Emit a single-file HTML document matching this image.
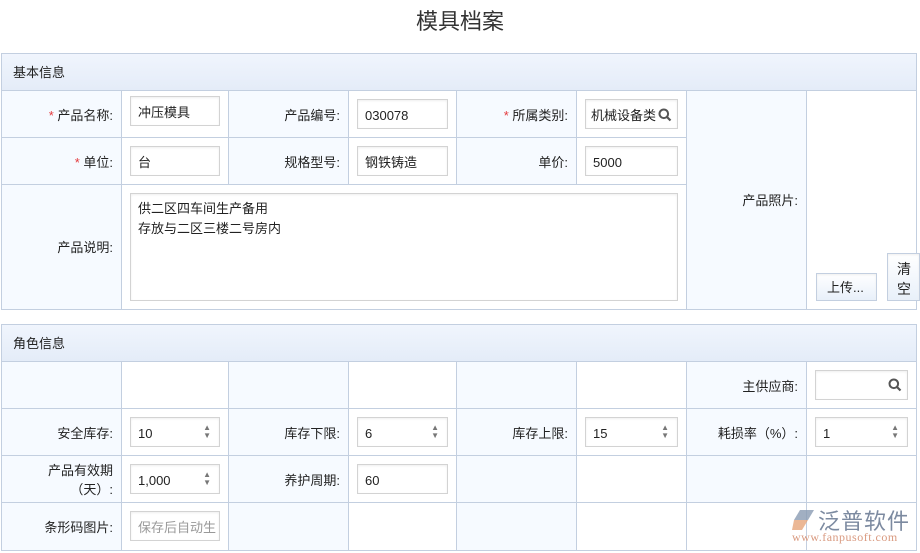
<!DOCTYPE html><html><head><meta charset="utf-8"><style>
*{box-sizing:border-box;margin:0;padding:0}
body{width:920px;height:553px;background:#fff;font-family:"Liberation Sans","Noto Sans CJK SC",sans-serif;font-size:13px;color:#222;position:relative;overflow:hidden}
.a{position:absolute}
.t{left:0;width:920px;top:4px;text-align:center;font-size:22px;color:#333}
.sec{border:1px solid #c3cfe0}
.hd{background:linear-gradient(#f0f5fd,#e4ecf8);border-bottom:1px solid #c3cfe0;padding-left:11px;font-size:13px}
.c{border-right:1px solid #c3cfe0;border-bottom:1px solid #c3cfe0}
.l{background:#f6faff;text-align:right;padding-right:8px}
.w{background:#fff}
.in{position:absolute;border:1px solid #d3d3d3;background:#fff;height:30px;line-height:31px;padding-left:7px;box-shadow:inset 0 1px 2px #eee}
.r{color:#e4393c}
.sp{position:absolute;right:8px;top:6px;font-size:8px;line-height:8px;color:#777}
</style></head><body>
<div class="a t">模具档案</div>
<div class="a sec" style="left:1px;top:53px;width:916px;height:257px"></div>
<div class="a hd" style="left:2px;top:54px;width:914px;height:37px;line-height:37px">基本信息</div>
<div class="a c l" style="left:2px;top:91px;width:120px;height:47px;line-height:49px"><span class="r">*</span> 产品名称:</div>
<div class="a c w" style="left:122px;top:91px;width:107px;height:47px"></div>
<div class="a c l" style="left:229px;top:91px;width:120px;height:47px;line-height:49px">产品编号:</div>
<div class="a c w" style="left:349px;top:91px;width:108px;height:47px"></div>
<div class="a c l" style="left:457px;top:91px;width:120px;height:47px;line-height:49px"><span class="r">*</span> 所属类别:</div>
<div class="a c w" style="left:577px;top:91px;width:110px;height:47px"></div>
<div class="a c l" style="left:2px;top:138px;width:120px;height:47px;line-height:49px"><span class="r">*</span> 单位:</div>
<div class="a c w" style="left:122px;top:138px;width:107px;height:47px"></div>
<div class="a c l" style="left:229px;top:138px;width:120px;height:47px;line-height:49px">规格型号:</div>
<div class="a c w" style="left:349px;top:138px;width:108px;height:47px"></div>
<div class="a c l" style="left:457px;top:138px;width:120px;height:47px;line-height:49px">单价:</div>
<div class="a c w" style="left:577px;top:138px;width:110px;height:47px"></div>
<div class="a c l" style="left:2px;top:185px;width:120px;height:124px;line-height:126px;border-bottom:none">产品说明:</div>
<div class="a c w" style="left:122px;top:185px;width:565px;height:124px;border-bottom:none"></div>
<div class="a c l" style="left:687px;top:91px;width:120px;height:218px;line-height:220px;border-bottom:none">产品照片:</div>
<div class="a w" style="left:807px;top:91px;width:109px;height:218px"></div>
<div class="in" style="left:130px;top:96px;width:90px">冲压模具</div>
<div class="in" style="left:357px;top:99px;width:91px">030078</div>
<div class="in" style="left:585px;top:99px;width:93px;padding-left:5px">机械设备类<svg class="a" style="right:5px;top:8px" width="14" height="14" viewBox="0 0 14 14"><circle cx="5.8" cy="5.8" r="4.3" fill="none" stroke="#555" stroke-width="2"/><path d="M9 9l3.5 3.5" stroke="#555" stroke-width="2.2"/></svg></div>
<div class="in" style="left:130px;top:146px;width:90px">台</div>
<div class="in" style="left:357px;top:146px;width:91px">钢铁铸造</div>
<div class="in" style="left:585px;top:146px;width:93px">5000</div>
<div class="in" style="left:130px;top:193px;width:548px;height:108px;line-height:20px;padding-top:5px">供二区四车间生产备用<br>存放与二区三楼二号房内</div>
<div class="in" style="left:816px;top:273px;width:61px;height:28px;line-height:28px;background:linear-gradient(#fff,#e8f0fa);border-color:#c3cfe0;padding-left:10px">上传...</div>
<div class="in" style="left:887px;top:253px;width:33px;height:48px;line-height:20px;background:linear-gradient(#fff,#e8f0fa);border-color:#c3cfe0;padding:5px 0 0 9px;font-size:14px">清<br>空</div>
<div class="a sec" style="left:1px;top:324px;width:916px;height:227px"></div>
<div class="a hd" style="left:2px;top:325px;width:914px;height:37px;line-height:37px">角色信息</div>
<div class="a c l" style="left:2px;top:362px;width:120px;height:47px"></div>
<div class="a c w" style="left:122px;top:362px;width:107px;height:47px"></div>
<div class="a c l" style="left:229px;top:362px;width:120px;height:47px"></div>
<div class="a c w" style="left:349px;top:362px;width:108px;height:47px"></div>
<div class="a c l" style="left:457px;top:362px;width:120px;height:47px"></div>
<div class="a c w" style="left:577px;top:362px;width:110px;height:47px"></div>
<div class="a c l" style="left:687px;top:362px;width:120px;height:47px;line-height:49px">主供应商:</div>
<div class="a c w" style="left:807px;top:362px;width:109px;height:47px;border-right:none"></div>
<div class="a c l" style="left:2px;top:409px;width:120px;height:47px;line-height:49px">安全库存:</div>
<div class="a c w" style="left:122px;top:409px;width:107px;height:47px"></div>
<div class="a c l" style="left:229px;top:409px;width:120px;height:47px;line-height:49px">库存下限:</div>
<div class="a c w" style="left:349px;top:409px;width:108px;height:47px"></div>
<div class="a c l" style="left:457px;top:409px;width:120px;height:47px;line-height:49px">库存上限:</div>
<div class="a c w" style="left:577px;top:409px;width:110px;height:47px"></div>
<div class="a c l" style="left:687px;top:409px;width:120px;height:47px;line-height:49px">耗损率（%）:</div>
<div class="a c w" style="left:807px;top:409px;width:109px;height:47px;border-right:none"></div>
<div class="a c l" style="left:2px;top:456px;width:120px;height:47px;line-height:19px;padding-top:5px">产品有效期<br>（天）:</div>
<div class="a c w" style="left:122px;top:456px;width:107px;height:47px"></div>
<div class="a c l" style="left:229px;top:456px;width:120px;height:47px;line-height:49px">养护周期:</div>
<div class="a c w" style="left:349px;top:456px;width:108px;height:47px"></div>
<div class="a c l" style="left:457px;top:456px;width:120px;height:47px"></div>
<div class="a c w" style="left:577px;top:456px;width:110px;height:47px"></div>
<div class="a c l" style="left:687px;top:456px;width:120px;height:47px"></div>
<div class="a c w" style="left:807px;top:456px;width:109px;height:47px;border-right:none"></div>
<div class="a c l" style="left:2px;top:503px;width:120px;height:47px;line-height:49px;border-bottom:none">条形码图片:</div>
<div class="a c w" style="left:122px;top:503px;width:107px;height:47px;border-bottom:none"></div>
<div class="a c l" style="left:229px;top:503px;width:120px;height:47px;border-bottom:none"></div>
<div class="a c w" style="left:349px;top:503px;width:108px;height:47px;border-bottom:none"></div>
<div class="a c l" style="left:457px;top:503px;width:120px;height:47px;border-bottom:none"></div>
<div class="a c w" style="left:577px;top:503px;width:110px;height:47px;border-bottom:none"></div>
<div class="a c w" style="left:687px;top:503px;width:120px;height:47px;border-bottom:none"></div>
<div class="a w" style="left:807px;top:503px;width:109px;height:47px"></div>
<div class="in" style="left:815px;top:370px;width:93px"><svg class="a" style="right:5px;top:7px" width="14" height="14" viewBox="0 0 14 14"><circle cx="5.8" cy="5.8" r="4.3" fill="none" stroke="#555" stroke-width="2"/><path d="M9 9l3.5 3.5" stroke="#555" stroke-width="2.2"/></svg></div>
<div class="in" style="left:130px;top:417px;width:90px">10<div class="sp">▲<br>▼</div></div>
<div class="in" style="left:357px;top:417px;width:91px">6<div class="sp">▲<br>▼</div></div>
<div class="in" style="left:585px;top:417px;width:93px">15<div class="sp">▲<br>▼</div></div>
<div class="in" style="left:815px;top:417px;width:93px">1<div class="sp">▲<br>▼</div></div>
<div class="in" style="left:130px;top:464px;width:90px">1,000<div class="sp">▲<br>▼</div></div>
<div class="in" style="left:357px;top:464px;width:91px">60</div>
<div class="in" style="left:130px;top:511px;width:90px;color:#999">保存后自动生</div>
<svg class="a" style="left:790px;top:508px" width="26" height="24" viewBox="0 0 26 24"><path d="M10 2h14l-6 10H4z" fill="#8a9bb3" opacity=".8"/><path d="M4 12h14l-6 10H2z" fill="#e6a57a" opacity=".8"/></svg>
<div class="a" style="left:818px;top:504px;font-size:22px;color:#7c8aa0;letter-spacing:1px">泛普软件</div>
<div class="a" style="left:792px;top:530px;font-size:12px;color:#d99a80;font-family:'Liberation Serif',serif;letter-spacing:.5px">www.fanpusoft.com</div>
</body></html>
